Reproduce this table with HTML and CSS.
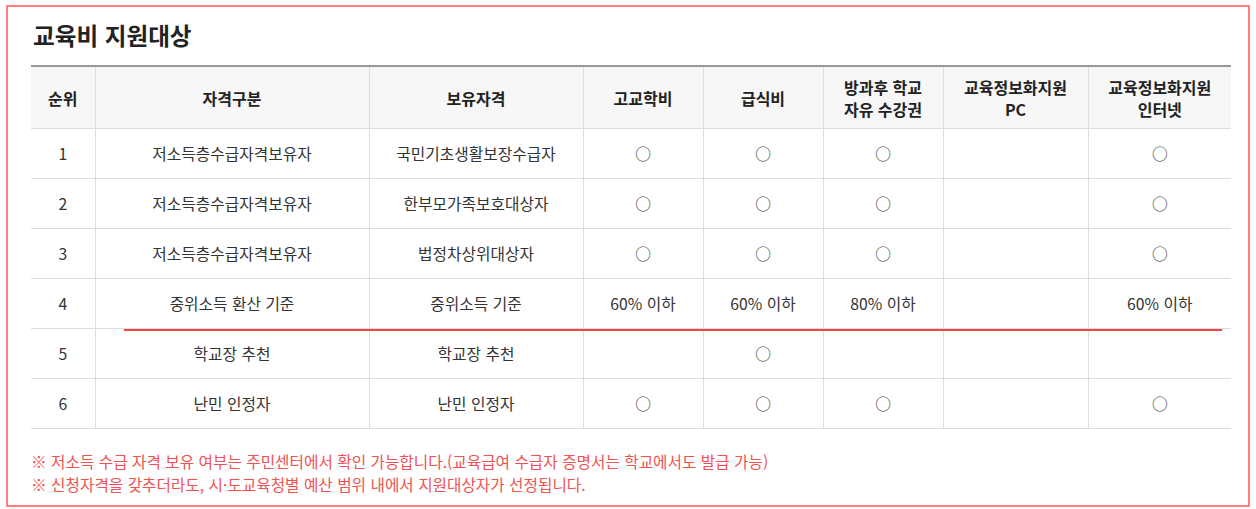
FILE: index.html
```html
<!DOCTYPE html>
<html lang="ko">
<head>
<meta charset="utf-8">
<link rel="stylesheet" href="styles.css">
</head>
<body>
<div class="box">
  <h2 class="title">교육비 지원대상</h2>
  <table class="tbl">
    <colgroup>
      <col class="c1"><col class="c2"><col class="c3"><col class="c4"><col class="c5"><col class="c6"><col class="c7"><col class="c8">
    </colgroup>
    <thead>
      <tr>
        <th>순위</th><th>자격구분</th><th>보유자격</th><th>고교학비</th><th>급식비</th><th>방과후 학교<br>자유 수강권</th><th>교육정보화지원<br>PC</th><th>교육정보화지원<br>인터넷</th>
      </tr>
    </thead>
    <tbody>
      <tr><td>1</td><td>저소득층수급자격보유자</td><td>국민기초생활보장수급자</td><td>○</td><td>○</td><td>○</td><td></td><td>○</td></tr>
      <tr><td>2</td><td>저소득층수급자격보유자</td><td>한부모가족보호대상자</td><td>○</td><td>○</td><td>○</td><td></td><td>○</td></tr>
      <tr><td>3</td><td>저소득층수급자격보유자</td><td>법정차상위대상자</td><td>○</td><td>○</td><td>○</td><td></td><td>○</td></tr>
      <tr><td>4</td><td>중위소득 환산 기준</td><td>중위소득 기준</td><td>60% 이하</td><td>60% 이하</td><td>80% 이하</td><td></td><td>60% 이하</td></tr>
      <tr><td>5</td><td>학교장 추천</td><td>학교장 추천</td><td></td><td>○</td><td></td><td></td><td></td></tr>
      <tr><td>6</td><td>난민 인정자</td><td>난민 인정자</td><td>○</td><td>○</td><td>○</td><td></td><td>○</td></tr>
    </tbody>
  </table>
  <div class="notes">
    <p>※ 저소득 수급 자격 보유 여부는 주민센터에서 확인 가능합니다.(교육급여 수급자 증명서는 학교에서도 발급 가능)</p>
    <p>※ 신청자격을 갖추더라도, 시·도교육청별 예산 범위 내에서 지원대상자가 선정됩니다.</p>
  </div>
  <div class="mark"></div>
</div>
</body>
</html>
```
FILE: styles.css
```css
html, body {
  margin: 0;
  padding: 0;
  background: #fff;
}
body {
  font-family: "Noto Sans CJK KR", "Noto Sans", sans-serif;
  color: #333;
}
.box {
  position: relative;
  margin: 5px 0 0 6px;
  border: 2px solid #ff8080;
  padding: 0 17px 0 23px;
  box-sizing: border-box;
  width: 1244px;
  height: 502px;
}
.title {
  margin: 0;
  padding: 13px 0 0 2px;
  height: 45px;
  box-sizing: border-box;
  font-size: 23.6px;
  line-height: 30px;
  font-weight: 700;
  color: #222;
}
.tbl {
  width: 1200px;
  margin-top: 13px;
  border-collapse: collapse;
  table-layout: fixed;
  border-top: 2px solid #999;
  font-size: 15.75px;
}
.c1 { width: 64px; }
.c2 { width: 274px; }
.c3 { width: 214px; }
.c4 { width: 120px; }
.c5 { width: 120px; }
.c6 { width: 120px; }
.c7 { width: 145px; }
.c8 { width: 143px; }
.tbl th, .tbl td {
  border: 1px solid #ddd;
  text-align: center;
  padding: 0;
}
.tbl th:first-child, .tbl td:first-child { border-left: 0; }
.tbl th:last-child, .tbl td:last-child { border-right: 0; }
.tbl th {
  background: #f7f7f7;
  height: 61px;
  font-weight: 700;
  font-size: 16px;
  line-height: 22px;
  color: #222;
  border-top: 0;
}
.tbl td {
  height: 49px;
  line-height: 22px;
  color: #333;
}
.notes {
  padding-top: 21px;
  color: #f05252;
  font-size: 15.7px;
  line-height: 23px;
}
.notes p {
  margin: 0;
}
.mark {
  position: absolute;
  left: 116px;
  top: 322px;
  width: 1098px;
  height: 2px;
  background: #ee4444;
}
```
